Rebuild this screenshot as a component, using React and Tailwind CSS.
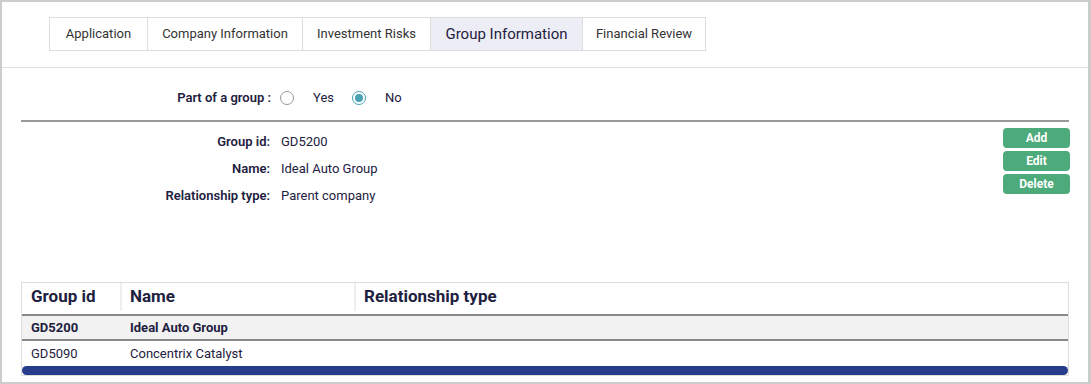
import React, { useState } from "react";

const tabs = [
  { label: "Application", w: "w-[97px]" },
  { label: "Company Information", w: "w-[155px]" },
  { label: "Investment Risks", w: "w-[128px]" },
  { label: "Group Information", w: "w-[152px]" },
  { label: "Financial Review", w: "w-[123px]" },
];

const groups = [
  { id: "GD5200", name: "Ideal Auto Group", type: "", selected: true },
  { id: "GD5090", name: "Concentrix Catalyst", type: "", selected: false },
];

function Radio({ checked }) {
  return (
    <span
      className={`flex h-[14px] w-[14px] items-center justify-center rounded-full border ${
        checked ? "border-[#4aa3b5]" : "border-[#999]"
      } bg-white`}
    >
      {checked && <span className="h-[8px] w-[8px] rounded-full bg-[#4aa3b5]"></span>}
    </span>
  );
}

export default function App() {
  const [active, setActive] = useState("Group Information");
  const [partOfGroup, setPartOfGroup] = useState(false);

  return (
    <div
      className="h-[384px] w-[1091px] overflow-hidden border-y-2 border-l-2 border-r-[3px] border-[#cccccc] bg-white text-[#1e2140]"
      style={{ fontFamily: "Roboto, 'Noto Sans', sans-serif" }}
    >
      {/* Tabs */}
      <div className="pl-[47px] pt-[15px]">
        <div className="flex h-[34px] w-fit border border-[#dddddd]">
          {tabs.map((t, i) => (
            <button
              key={t.label}
              onClick={() => setActive(t.label)}
              className={`${t.w} flex items-center justify-center ${
                i > 0 ? "border-l border-[#dddddd]" : ""
              } ${
                active === t.label
                  ? "bg-[#ededf5] text-[15px] text-[#1e2140]"
                  : "bg-white text-[13px] text-[#333333]"
              }`}
            >
              {t.label}
            </button>
          ))}
        </div>
      </div>

      <div className="mt-[16px] border-t border-[#e0e0e0]"></div>

      {/* Part of a group */}
      <div className="flex h-[52px] items-center pt-[8px]">
        <div className="w-[269px] text-right text-[13px] font-semibold">Part of a group :</div>
        <div className="ml-[9px] flex items-center text-[13px]">
          <button onClick={() => setPartOfGroup(true)} className="flex items-center">
            <Radio checked={partOfGroup} />
            <span className="ml-[19px]">Yes</span>
          </button>
          <button onClick={() => setPartOfGroup(false)} className="ml-[18px] flex items-center">
            <Radio checked={!partOfGroup} />
            <span className="ml-[19px]">No</span>
          </button>
        </div>
      </div>

      <div className="mx-[19px] border-t-2 border-[#999999]"></div>

      {/* Details + actions */}
      <div className="flex justify-between pr-[18px]">
        <div className="flex flex-col pt-[6px] text-[13px]">
          {[
            ["Group id:", "GD5200"],
            ["Name:", "Ideal Auto Group"],
            ["Relationship type:", "Parent company"],
          ].map(([k, v]) => (
            <div key={k} className="flex h-[27px] items-center">
              <span className="w-[268px] text-right font-semibold">{k}</span>
              <span className="ml-[11px]">{v}</span>
            </div>
          ))}
        </div>
        <div className="flex flex-col gap-[3px] pt-[6px]">
          {["Add", "Edit", "Delete"].map((b) => (
            <button
              key={b}
              className="h-[20px] w-[67px] rounded-[4px] bg-[#4caa7b] text-[12px] font-bold leading-none text-white"
            >
              {b}
            </button>
          ))}
        </div>
      </div>

      {/* Table */}
      <div className="mx-[19px] mt-[73px] border border-[#dddddd]">
        <div className="flex h-[33px] items-center border-b-2 border-[#888888] pb-[3px] text-[17px] font-bold">
          <div className="flex h-[28px] w-[98px] items-center pl-[9px]">Group id</div>
          <div className="flex h-[28px] w-[234px] items-center border-l-2 border-[#eeeeee] pl-[8px]">Name</div>
          <div className="flex h-[28px] flex-1 items-center border-l-2 border-[#eeeeee] pl-[8px]">Relationship type</div>
        </div>
        {groups.map((g) => (
          <div
            key={g.id}
            className={`flex h-[25px] items-center text-[13px] ${
              g.selected ? "border-b-2 border-[#888888] bg-[#f2f2f2] font-bold" : "bg-white"
            }`}
          >
            <div className="w-[98px] pl-[9px]">{g.id}</div>
            <div className="w-[234px] pl-[10px]">{g.name}</div>
            <div className="flex-1 pl-[10px]">{g.type}</div>
          </div>
        ))}
        <div className="flex h-[9px] items-center bg-white">
          <div className="h-[9px] flex-1 rounded-full bg-[#283c8c]"></div>
        </div>
      </div>
    </div>
  );
}
